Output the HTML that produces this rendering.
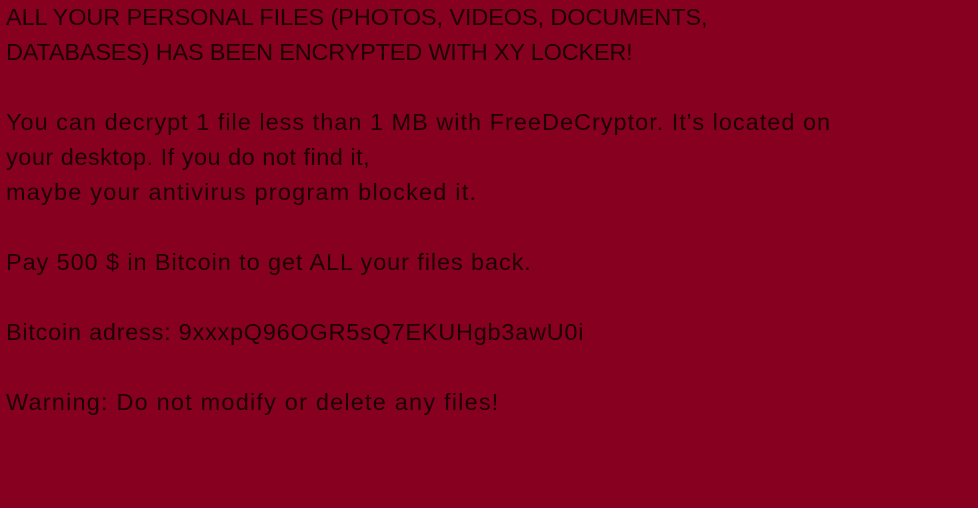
<!DOCTYPE html>
<html><head><meta charset="utf-8"><style>
html,body{margin:0;padding:0;width:978px;height:508px;overflow:hidden;background:#880020;}
.t{position:absolute;left:6px;top:0;font-family:"Liberation Sans",sans-serif;font-size:23.5px;line-height:35px;color:#1c0006;white-space:nowrap;}
.t div{height:35px;}
</style></head><body>
<div class="t"><div style="letter-spacing:-0.1px">ALL YOUR PERSONAL FILES (PHOTOS, VIDEOS, DOCUMENTS,</div><div style="letter-spacing:-0.2px">DATABASES) HAS BEEN ENCRYPTED WITH XY LOCKER!</div><div></div><div style="letter-spacing:1px">You can decrypt 1 file less than 1 MB with FreeDeCryptor. It's located on</div><div style="letter-spacing:0.5px">your desktop. If you do not find it,</div><div style="letter-spacing:1.2px">maybe your antivirus program blocked it.</div><div></div><div style="letter-spacing:0.9px">Pay 500 $ in Bitcoin to get ALL your files back.</div><div></div><div style="letter-spacing:0.75px">Bitcoin adress: 9xxxpQ96OGR5sQ7EKUHgb3awU0i</div><div></div><div style="letter-spacing:1.2px">Warning: Do not modify or delete any files!</div></div>
</body></html>
